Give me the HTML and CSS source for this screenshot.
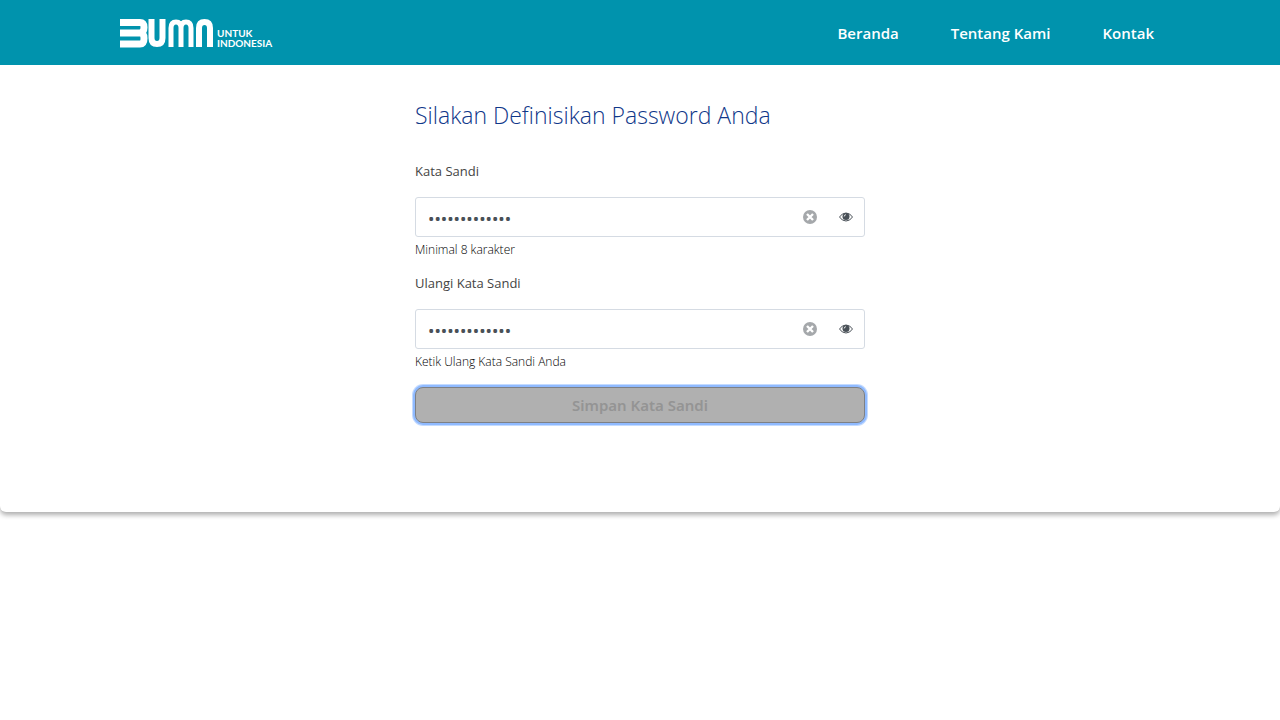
FILE: index.html
```html
<!DOCTYPE html>
<html lang="id">
<head>
<meta charset="utf-8">
<meta name="viewport" content="width=device-width, initial-scale=1">
<title>Definisikan Password</title>
<link rel="stylesheet" href="styles.css">
</head>
<body>
<main class="panel">
  <header class="navbar">
    <a class="brand" href="#">
      <svg class="brand-mark" viewBox="0 0 94 30" width="94" height="30" fill="none" stroke="#fff" stroke-width="6" aria-hidden="true">
        <path d="M0 4.500H20Q24 4.500 24 9.500T20 15H0M20 15Q24 15 24 20.500T20 26H0" stroke-width="7"/>
        <path d="M31.500 1V20Q31.500 26 37 26T42.500 20V1"/>
        <path d="M51 29V10Q51 4 56 4T61 10V29M61 10Q61 4 66 4T71 10V29" stroke-width="5"/>
        <path d="M79 29V10Q79 4 84.500 4T90 10V29"/>
      </svg>
      <span class="brand-text">UNTUK<br>INDONESIA</span>
    </a>
    <nav class="menu">
      <a class="menu-link" href="#">Beranda</a>
      <a class="menu-link" href="#">Tentang Kami</a>
      <a class="menu-link" href="#">Kontak</a>
    </nav>
  </header>
  <form class="form">
    <h1 class="title">Silakan Definisikan Password Anda</h1>
    <div class="group">
      <label class="label" for="password">Kata Sandi</label>
      <div class="field">
        <input class="input" id="password" type="password" value="katasandi1234">
        <button class="icon-button" type="button" aria-label="Hapus">
          <svg width="14" height="14" viewBox="0 0 14 14" aria-hidden="true"><circle cx="7" cy="7" r="7" fill="#a5a8ab"/><path d="M4 4l6 6M10 4L4 10" stroke="#fff" stroke-width="2.400"/></svg>
        </button>
        <button class="icon-button" type="button" aria-label="Tampilkan">
          <svg width="14" height="10" viewBox="0 0 14 10" aria-hidden="true"><path d="M.5 5Q3 1 7 1T13.500 5Q11 9 7 9T.5 5Z" fill="#fff" stroke="#495057"/><circle cx="7" cy="4.500" r="3.500" fill="#495057"/><path d="M5.200 4.500Q5.200 2.700 7 2.700" fill="none" stroke="#fff" stroke-width=".8"/></svg>
        </button>
      </div>
      <p class="hint">Minimal 8 karakter</p>
    </div>
    <div class="group">
      <label class="label" for="confirm">Ulangi Kata Sandi</label>
      <div class="field">
        <input class="input" id="confirm" type="password" value="katasandi1234">
        <button class="icon-button" type="button" aria-label="Hapus">
          <svg width="14" height="14" viewBox="0 0 14 14" aria-hidden="true"><circle cx="7" cy="7" r="7" fill="#a5a8ab"/><path d="M4 4l6 6M10 4L4 10" stroke="#fff" stroke-width="2.400"/></svg>
        </button>
        <button class="icon-button" type="button" aria-label="Tampilkan">
          <svg width="14" height="10" viewBox="0 0 14 10" aria-hidden="true"><path d="M.5 5Q3 1 7 1T13.500 5Q11 9 7 9T.5 5Z" fill="#fff" stroke="#495057"/><circle cx="7" cy="4.500" r="3.500" fill="#495057"/><path d="M5.200 4.500Q5.200 2.700 7 2.700" fill="none" stroke="#fff" stroke-width=".8"/></svg>
        </button>
      </div>
      <p class="hint">Ketik Ulang Kata Sandi Anda</p>
    </div>
    <button class="submit" type="button">Simpan Kata Sandi</button>
  </form>
</main>
</body>
</html>
```
FILE: styles.css
```css
* { box-sizing: border-box; }
body {
  min-height: 100vh;
  margin: 0;
  background: #fff;
  color: #212529;
  font-family: "Open Sans", "Noto Sans", sans-serif;
}
.panel {
  padding-bottom: 89px;
  border-radius: 0 0 6px 6px;
  background: #fff;
  box-shadow: 0 3px 5px rgba(0, 0, 0, 0.32);
}
.navbar {
  display: flex;
  align-items: center;
  justify-content: space-between;
  min-height: 65px;
  padding: 0 100px 0 120px;
  background: #0093ad;
}
.brand {
  display: flex;
  align-items: flex-end;
  gap: 3px;
  color: #fff;
  text-decoration: none;
}
.brand-mark { display: block; }
.brand-text {
  font-family: Lato, sans-serif;
  font-size: 10px;
  font-weight: 700;
  line-height: 10px;
}
.menu { display: flex; }
.menu-link {
  padding: 0 26px;
  color: #fff;
  font-size: 15px;
  font-weight: 600;
  line-height: 24px;
  text-decoration: none;
}
.form {
  display: flex;
  flex-direction: column;
  max-width: 450px;
  margin: 0 auto;
  padding-top: 35px;
}
.title {
  margin: 0 0 29px;
  color: #0f3789;
  font-size: 23px;
  font-weight: 300;
  line-height: 30px;
}
.group { margin-bottom: 12px; }
.group:last-of-type { margin-bottom: 16px; }
.label {
  display: block;
  margin-bottom: 14px;
  color: #444;
  font-size: 13px;
  line-height: 24px;
}
.field {
  display: flex;
  align-items: center;
  height: 40px;
  border: 1px solid #d5dbe3;
  border-radius: 3px;
}
.input {
  flex: 1;
  min-width: 0;
  padding: 2px 12px 0;
  border: 0;
  outline: 0;
  background: transparent;
  color: #495057;
  font-family: "Noto Sans", sans-serif;
  font-size: 17px;
}
.icon-button {
  display: flex;
  align-items: center;
  justify-content: center;
  width: 36px;
  height: 36px;
  padding: 0;
  border: 0;
  background: transparent;
}
.hint {
  margin: 4px 0 0;
  color: #000;
  font-size: 12px;
  font-weight: 300;
  line-height: 18px;
}
.submit {
  height: 36px;
  border: 1px solid #7d8085;
  border-radius: 8px;
  background: #b0b0b0;
  box-shadow: 0 0 0 2px #8fbaff, 0 0 0 3px #c4dbff;
  color: #949494;
  font-family: "Noto Sans", sans-serif;
  font-size: 15px;
  font-weight: 600;
}
```
